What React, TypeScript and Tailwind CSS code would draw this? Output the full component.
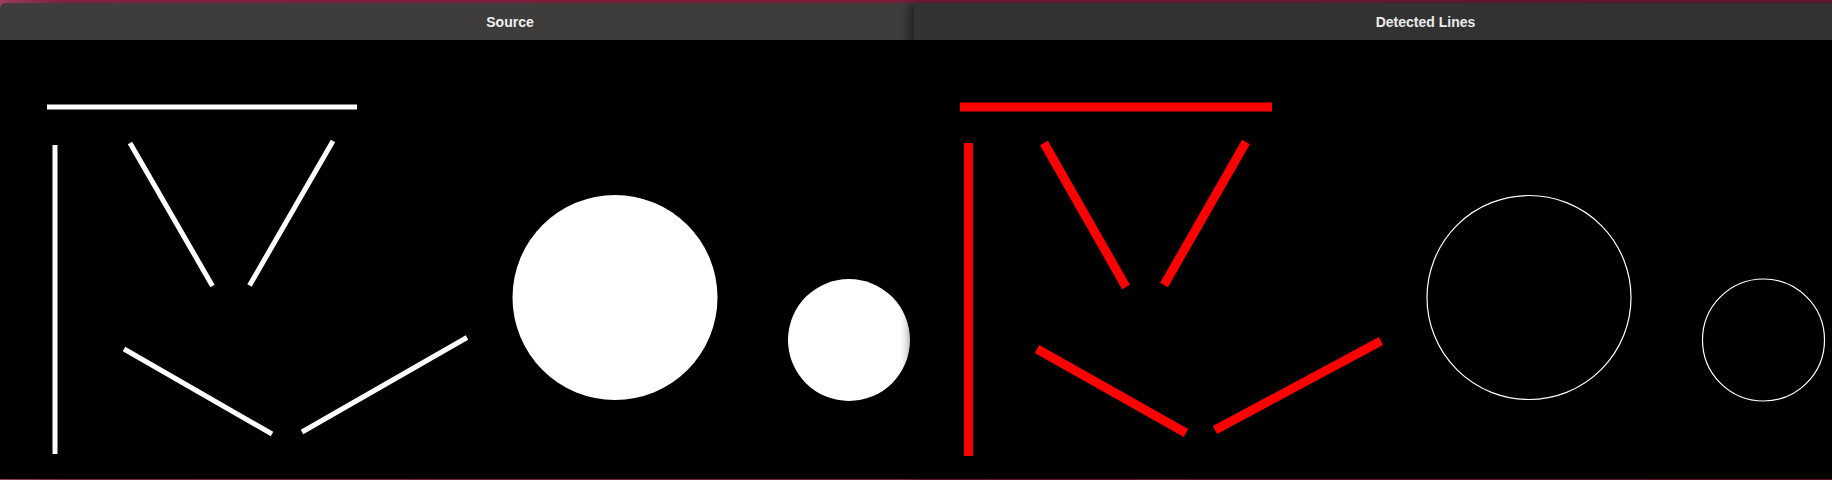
import React from "react";

const font = { fontFamily: '"Liberation Sans", Arial, sans-serif' };

function SourceImage() {
  return (
    <svg width="1020" height="439" viewBox="0 0 1020 439" className="block">
      <g stroke="#ffffff" strokeWidth="5" strokeLinecap="butt" fill="none">
        <line x1="47" y1="67" x2="357" y2="67" />
        <line x1="55" y1="105" x2="55" y2="414" />
        <line x1="130" y1="103" x2="212.5" y2="246" />
        <line x1="333" y1="101" x2="249.5" y2="245.5" />
        <line x1="124" y1="309" x2="272" y2="394" />
        <line x1="302" y1="392" x2="467" y2="297.5" />
      </g>
      <circle cx="615" cy="257.5" r="102.5" fill="#ffffff" />
      <circle cx="849" cy="300" r="61" fill="#ffffff" />
    </svg>
  );
}

function DetectedImage() {
  return (
    <svg width="1024" height="439" viewBox="0 0 1024 439" className="block">
      <g stroke="#ff0000" strokeWidth="9" strokeLinecap="butt" fill="none">
        <line x1="47" y1="67" x2="359" y2="67" />
        <line x1="55.5" y1="103" x2="55.5" y2="416" />
        <line x1="131" y1="103" x2="213" y2="247" />
        <line x1="333" y1="102" x2="251" y2="245" />
        <line x1="124" y1="309" x2="273" y2="393" />
        <line x1="302" y1="390" x2="468" y2="301" />
      </g>
      <g stroke="#ffffff" strokeWidth="1.2" fill="none">
        <circle cx="616" cy="257.5" r="102" />
        <circle cx="850.5" cy="300" r="61" />
      </g>
    </svg>
  );
}

export default function App() {
  return (
    <div
      className="relative w-[1832px] h-[480px] overflow-hidden bg-[linear-gradient(90deg,#9a3a5c_0px,#7e2440_60px,#7a1f3a_600px,#6f1c36_1832px)]"
      style={font}
    >
      {/* Left window: Source */}
      <div className="absolute left-0 top-[3px] w-[1020px] h-[476px] flex flex-col rounded-tl-[6px] overflow-hidden">
        <div className="h-[37px] shrink-0 bg-[#3e3d3b] flex items-center justify-center">
          <span className="text-[14px] font-bold text-[#f2f2f0] leading-none">Source</span>
        </div>
        <div className="flex-1 bg-black">
          <SourceImage />
        </div>
      </div>

      {/* Right window: Detected Lines */}
      <div className="absolute left-[913px] top-[3px] w-[1024px] h-[476px] flex flex-col rounded-tl-[6px] overflow-hidden shadow-[-4px_0_10px_rgba(0,0,0,0.45)]">
        <div className="h-[37px] shrink-0 bg-[#333232] border-l border-[#262626] flex items-center justify-center">
          <span className="text-[14px] font-bold text-[#ececea] leading-none">Detected Lines</span>
        </div>
        <div className="flex-1 bg-black">
          <DetectedImage />
        </div>
      </div>
    </div>
  );
}
